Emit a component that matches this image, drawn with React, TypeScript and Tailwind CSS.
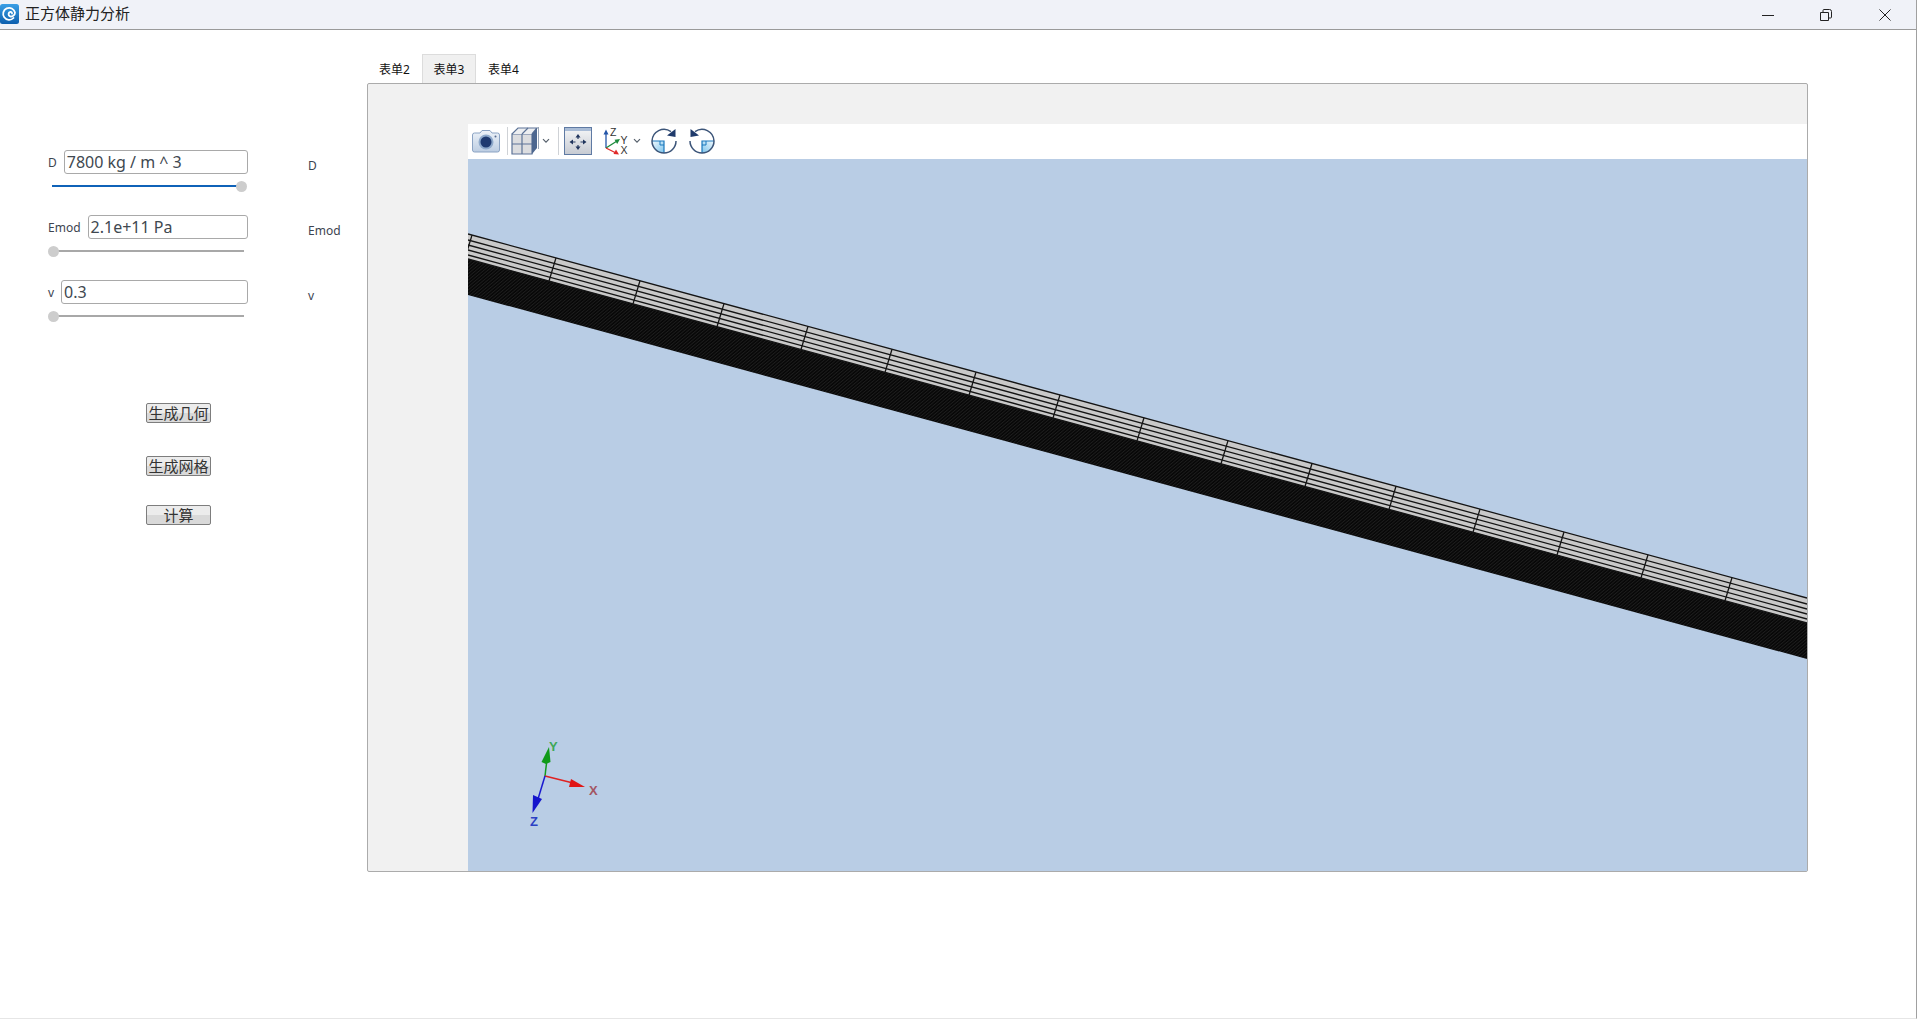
import React from "react";

const slope = 364 / 1339
const edge = (x: number, off: number) => 75 + off + slope * x

const stripLines = [0, 6, 11, 16, 21, 25]
const crossLines = Array.from({ length: 16 }, (_, i) => 4 + 84 * i)

const Slider = ({ full }: { full?: boolean }) => (
  <div className="relative h-[11px] w-[196px] mt-[7px]">
    {full ? (
      <>
        <div className="absolute left-[4px] top-[4px] h-[2px] w-[185px] bg-[#0f62b8]" />
        <div className="absolute left-[188px] top-0 h-[11px] w-[11px] rounded-full bg-[#cdcdcd]" />
      </>
    ) : (
      <>
        <div className="absolute left-[4px] top-[4px] h-[2px] w-[192px] bg-[#a8a8a8]" />
        <div className="absolute left-0 top-0 h-[11px] w-[11px] rounded-full bg-[#cdcdcd]" />
      </>
    )}
  </div>
)

const ParamRow = ({ label, value, full }: { label: string; value: string; full?: boolean }) => (
  <div className="flex h-[65px]">
    <div className="w-[260px]">
      <div className="flex items-center w-[200px] h-[24px]">
        <span className="text-[12px] text-[#3d4450] mr-[7px] mt-[1px] leading-none">{label}</span>
        <div className="flex-1 h-[24px] rounded-[3px] border border-[#a9a9a9] pl-[2px] text-[16px] leading-[22px] text-[#404850]">
          {value}
        </div>
      </div>
      <Slider full={full} />
    </div>
    <span className="text-[12px] leading-[16px] pt-[8px] text-[#3d4450]">{label}</span>
  </div>
)

const GrayButton = ({ text, className }: { text: string; className: string }) => (
  <button className={"block w-[65px] h-[20px] rounded-[2px] border border-[#7d7d7d] bg-gradient-to-b from-[#ececec] from-50% to-[#d9d9d9] to-50% text-[15px] leading-[17px] text-[#333] whitespace-nowrap overflow-hidden " + className}>
    {text}
  </button>
)

const Tab = ({ text, active }: { text: string; active?: boolean }) => (
  <div className={active
    ? "h-[29px] w-[54px] border border-b-0 border-[#dcdcdc] bg-[#f0f0f0] text-center text-[12px] leading-[30px] text-[#111]"
    : "h-[29px] px-[12px] text-[12px] leading-[31px] text-[#111]"}>
    {text}
  </div>
)

const Chevron = () => (
  <svg width="8" height="6" viewBox="0 0 8 6" className="shrink-0">
    <path d="M1 1.2 L4 4.2 L7 1.2" fill="none" stroke="#56606c" strokeWidth="1.2" />
  </svg>
)

const Sep = () => <div className="w-px h-[28px] bg-[#cfd2d6] shrink-0" />

const CameraIcon = () => (
  <svg width="28" height="24" viewBox="0 0 28 24" className="shrink-0">
    <defs>
      <linearGradient id="cam" x1="0" y1="0" x2="0" y2="1">
        <stop offset="0" stopColor="#eef3f9" />
        <stop offset="1" stopColor="#bccde2" />
      </linearGradient>
    </defs>
    <path d="M2.5 4 H8 L10 1.5 H18 L20 4 H25.5 Q27.5 4 27.5 6 V21 Q27.5 23 25.5 23 H2.5 Q.5 23 .5 21 V6 Q.5 4 2.5 4 Z" fill="url(#cam)" stroke="#8ba3c3" />
    <circle cx="14" cy="13" r="7.5" fill="#8ea9cb" />
    <circle cx="14" cy="13" r="5.5" fill="#1f3a70" />
    <circle cx="23.5" cy="7.5" r="1" fill="#54698e" />
  </svg>
)

const CubeIcon = () => (
  <svg width="28" height="28" viewBox="0 0 28 28" className="shrink-0">
    <path d="M1 7 L7 1 H26 V21 L21 27 H1 Z" fill="#dfe3e8" />
    <path d="M1 7 H21 V27 H1 Z" fill="#dcdde0" stroke="#5d7397" strokeWidth="1.2" />
    <path d="M1 7 L7 1 H26 L21 7" fill="#eceef1" stroke="#5d7397" strokeWidth="1.2" />
    <path d="M21 7 L26 1 V21 L21 27 Z" fill="#4d678f" />
    <path d="M11 7 V27 M1 17 H21 M11 7 L17 1" stroke="#5d7397" strokeWidth="1.2" fill="none" />
    <path d="M27.5 0 V22" stroke="#9aa6b6" strokeWidth="1" />
  </svg>
)

const FitIcon = () => (
  <svg width="28" height="28" viewBox="0 0 28 28" className="shrink-0">
    <defs>
      <linearGradient id="fit" x1="0" y1="0" x2="0" y2="1">
        <stop offset="0" stopColor="#f6f7f8" />
        <stop offset="1" stopColor="#c6cad2" />
      </linearGradient>
    </defs>
    <rect x=".5" y=".5" width="27" height="27" fill="url(#fit)" stroke="#5f7aa3" />
    <rect x="1" y="1" width="26" height="3" fill="#a9bcd6" />
    <path d="M14 9.500 V12 M14 18 V20.500 M9 15 H11.500 M16.500 15 H19" stroke="#2a3f66" strokeWidth="1.2" />
    <path d="M14 7 L11.500 10.500 H16.500 Z M14 23 L11.500 19.500 H16.500 Z M5.500 15 L9 12.500 V17.500 Z M22.500 15 L19 12.500 V17.500 Z" fill="#20345c" />
  </svg>
)

const AxisIcon = () => (
  <svg width="28" height="30" viewBox="0 0 28 30" className="shrink-0">
    <path d="M4 22 V7" stroke="#2255a8" strokeWidth="1.3" />
    <path d="M4 3.500 L1.500 8.500 H6.500 Z" fill="#2255a8" />
    <path d="M4 22 L15 15" stroke="#1b8a3c" strokeWidth="1.3" />
    <path d="M18 13 L12.500 13.800 L15.200 18 Z" fill="#1b8a3c" />
    <path d="M4 22 L14 27" stroke="#e02a2a" strokeWidth="1.3" />
    <path d="M17 28.500 L11.500 28 L14 23.500 Z" fill="#e02a2a" />
    <text x="8" y="9.500" fontSize="10.500" fill="#333" fontFamily="Liberation Sans, sans-serif">Z</text>
    <text x="18.500" y="18" fontSize="10.500" fill="#333" fontFamily="Liberation Sans, sans-serif">Y</text>
    <text x="18.500" y="28" fontSize="10.500" fill="#333" fontFamily="Liberation Sans, sans-serif">X</text>
  </svg>
)

const RotateIcon = ({ ccw }: { ccw?: boolean }) => (
  <svg width="26" height="26" viewBox="0 0 26 26" className={ccw ? "shrink-0 -scale-x-100" : "shrink-0"}>
    <defs>
      <linearGradient id={ccw ? "rotB" : "rotA"} x1="0" y1="0" x2="1" y2="1">
        <stop offset="0" stopColor="#f2f9fd" />
        <stop offset="1" stopColor="#7cc4ec" />
      </linearGradient>
    </defs>
    <path d="M1 13 H13 V25 A12 12 0 0 1 1 13 Z" fill={ccw ? "url(#rotB)" : "url(#rotA)"} />
    <path d="M1 13 H13 V25" fill="none" stroke="#1b78bd" strokeWidth="1.2" />
    <path d="M9 13 V17 H13" fill="none" stroke="#1b78bd" strokeWidth="1" />
    <path d="M20 3.600 A12 12 0 0 0 1 13 A12 12 0 0 0 25 13" fill="none" stroke="#3c5579" strokeWidth="1.500" />
    <path d="M24.500 1 L24.500 9 L16 7.500 Z" fill="#1f3a6b" />
  </svg>
)

const MeshView = () => (
  <svg width="1339" height="712" viewBox="0 0 1339 712" className="block bg-[#b9cde5]">
    <defs>
      <pattern id="hatch" width="2.500" height="2.500" patternUnits="userSpaceOnUse" patternTransform="rotate(-40)">
        <rect width="2.500" height="2.500" fill="#060606" />
        <rect width="2.500" height="1" fill="#1e1e1e" />
      </pattern>
    </defs>
    <polygon points={`0,${edge(0, 0)} 1339,${edge(1339, 0)} 1339,${edge(1339, 25)} 0,${edge(0, 25)}`} fill="#c9c9c9" />
    <polygon points={`0,${edge(0, 25)} 1339,${edge(1339, 25)} 1339,${edge(1339, 61)} 0,${edge(0, 61)}`} fill="url(#hatch)" />
    {stripLines.map((o) => (
      <line key={o} x1="0" y1={edge(0, o)} x2="1339" y2={edge(1339, o)} stroke="#141414" strokeWidth="1.300" />
    ))}
    {crossLines.map((x) => (
      <line key={x} x1={x} y1={edge(x, 0)} x2={x - 7} y2={edge(x - 7, 25)} stroke="#141414" strokeWidth="1.300" />
    ))}

    {/* triad */}
    <path d="M77 617 L79 600" stroke="#119a1c" strokeWidth="1.500" />
    <path d="M81 588 L73.500 603 L78 605 L82.500 603 Z" fill="#0f9a18" />
    <path d="M77 617 L105 624" stroke="#e02020" strokeWidth="1.500" />
    <path d="M117 628 L103 620 L101 628 Z" fill="#e01515" />
    <path d="M77 617 L70 640" stroke="#1a1ad0" strokeWidth="1.500" />
    <path d="M64.500 654 L65 636 L74 640 Z" fill="#1414cc" />
    <text x="81" y="592" fontSize="13" fontWeight="700" fill="#3fa858" fontFamily="Liberation Sans, sans-serif">Y</text>
    <text x="121" y="636" fontSize="13" fontWeight="700" fill="#a35563" fontFamily="Liberation Sans, sans-serif">X</text>
    <text x="62" y="667" fontSize="13" fontWeight="700" fill="#2b40c4" fontFamily="Liberation Sans, sans-serif">Z</text>
  </svg>
)

const App: React.FC = () => {
  return (
    <div className="h-[1019px] w-[1917px] overflow-hidden flex flex-col bg-white border-r border-b border-r-[#a0a0a0] border-b-[#e6e6e6] font-['Noto_Sans','Noto_Sans_CJK_SC',sans-serif]">
      {/* title bar */}
      <div className="h-[30px] shrink-0 flex items-center bg-[#f0f2f8] border-b border-[#9a9a9a]">
        <svg width="19" height="20" viewBox="0 0 19 20" className="shrink-0 mt-[-1px]">
          <defs>
            <linearGradient id="logo" x1="0" y1="0" x2="0" y2="1">
              <stop offset="0" stopColor="#3a9fe6" />
              <stop offset="1" stopColor="#0d5fae" />
            </linearGradient>
          </defs>
          <rect width="19" height="20" rx="2.500" fill="url(#logo)" />
          <path d="M13.500 14 A6 6 0 1 1 15 8.500 C15 11.500 12 13 10 12.300 C8 11.500 8 8.500 10.300 8 C11.500 7.800 12.200 8.600 12 9.500" fill="none" stroke="#fff" strokeWidth="1.800" strokeLinecap="round" />
        </svg>
        <span className="ml-[6px] mt-[-2px] text-[15px] leading-none text-[#222]">正方体静力分析</span>
        <div className="ml-auto flex items-center">
          <svg width="12" height="12" viewBox="0 0 12 12" className="mr-[46px]">
            <path d="M0 6.500 H12" stroke="#222" strokeWidth="1" />
          </svg>
          <svg width="12" height="12" viewBox="0 0 12 12" className="mr-[47px]">
            <path d="M.5 3.500 H8.500 V11.500 H.5 Z" fill="none" stroke="#222" strokeWidth="1" />
            <path d="M3 3 V1.500 Q3 .5 4 .5 H9.500 Q11.500 .5 11.500 2.500 V8 Q11.500 9 10.500 9 H9" fill="none" stroke="#222" strokeWidth="1" />
          </svg>
          <svg width="12" height="12" viewBox="0 0 12 12" className="mr-[25px]">
            <path d="M.5 .5 L11.500 11.500 M11.500 .5 L.5 11.500" stroke="#222" strokeWidth="1" />
          </svg>
        </div>
      </div>

      <div className="flex flex-1 min-h-0">
        {/* left params */}
        <div className="w-[367px] shrink-0 pt-[120px] pl-[48px]">
          <ParamRow label="D" value="7800 kg / m ^ 3" full />
          <ParamRow label="Emod" value="2.1e+11 Pa" />
          <ParamRow label="v" value="0.3" />
          <div className="pl-[98px]">
            <GrayButton text="生成几何" className="mt-[58px]" />
            <GrayButton text="生成网格" className="mt-[33px]" />
            <GrayButton text="计算" className="mt-[29px]" />
          </div>
        </div>

        {/* tabs */}
        <div className="pt-[24px]">
          <div className="flex">
            <Tab text="表单2" />
            <Tab text="表单3" active />
            <Tab text="表单4" />
          </div>
          <div className="w-[1441px] h-[789px] border border-[#ababab] rounded-[2px] bg-[#f1f1f1] pt-[40px] pl-[100px]">
            <div className="h-[35px] bg-white flex items-center pl-[4px] pb-[2px]">
              <CameraIcon />
              <div className="ml-[7px]"><Sep /></div>
              <div className="ml-[3px]"><CubeIcon /></div>
              <div className="ml-[3px]"><Chevron /></div>
              <div className="ml-[8px]"><Sep /></div>
              <div className="ml-[5px]"><FitIcon /></div>
              <div className="ml-[10px]"><AxisIcon /></div>
              <div className="ml-[3px]"><Chevron /></div>
              <div className="ml-[10px]"><RotateIcon /></div>
              <div className="ml-[12px]"><RotateIcon ccw /></div>
            </div>
            <MeshView />
          </div>
        </div>
      </div>
    </div>
  )
}

export default App
